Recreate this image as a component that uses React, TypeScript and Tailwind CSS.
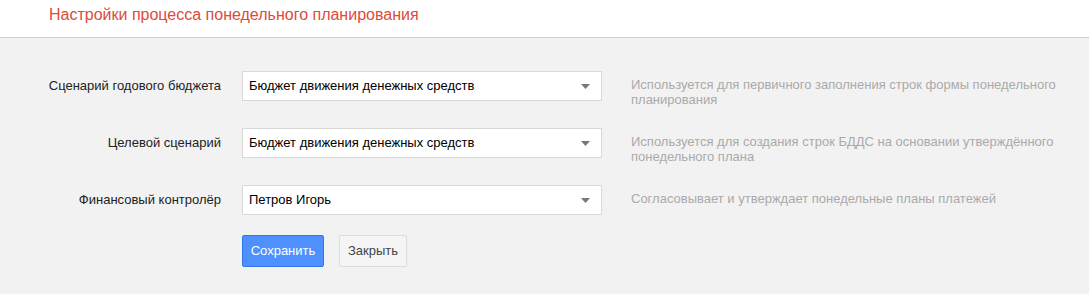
import React from "react";

const rows = [
  {
    label: "Сценарий годового бюджета",
    value: "Бюджет движения денежных средств",
    help: "Используется для первичного заполнения строк формы понедельного планирования",
  },
  {
    label: "Целевой сценарий",
    value: "Бюджет движения денежных средств",
    help: "Используется для создания строк БДДС на основании утверждённого понедельного плана",
  },
  {
    label: "Финансовый контролёр",
    value: "Петров Игорь",
    help: "Согласовывает и утверждает понедельные планы платежей",
  },
];

export default function App() {
  return (
    <div className="w-[1089px] h-[294px] bg-[#f2f2f2] font-['Liberation_Sans',Arial,sans-serif] overflow-hidden">
      <div className="h-[38px] bg-white border-b border-[#d0d0d0] pl-[49px] pt-[5px]">
        <h1 className="text-[16px] leading-[20px] text-[#dd4b39]">
          Настройки процесса понедельного планирования
        </h1>
      </div>
      <div className="pt-[33px]">
        <div className="flex flex-col gap-[27px]">
          {rows.map((r) => (
            <div key={r.label} className="flex h-[30px]">
              <div className="w-[221px] shrink-0 flex items-center justify-end text-[13px] text-[#222]">
                {r.label}
              </div>
              <div className="ml-[21px] w-[360px] h-[30px] shrink-0 bg-white border border-[#d9d9d9] flex items-center pl-[6px] pr-[11px] text-[13px] text-black">
                <span className="flex-1">{r.value}</span>
                <svg width="9" height="5" viewBox="0 0 9 5">
                  <path d="M0 0 H9 L4.5 5 Z" fill="#777" />
                </svg>
              </div>
              <div className="ml-[29px] pr-[10px] flex-1 pt-[6px] text-[13px] leading-[15px] text-[#aaa]">
                {r.help}
              </div>
            </div>
          ))}
        </div>
        <div className="flex gap-[15px] ml-[242px] mt-[20px]">
          <button className="h-[32px] w-[82px] rounded-[2px] bg-[#4d90fe] border border-[#3079ed] text-white text-[13px]">
            Сохранить
          </button>
          <button className="h-[32px] w-[68px] rounded-[2px] bg-[#f5f5f5] border border-[#dcdcdc] text-[#444] text-[13px]">
            Закрыть
          </button>
        </div>
      </div>
    </div>
  );
}
